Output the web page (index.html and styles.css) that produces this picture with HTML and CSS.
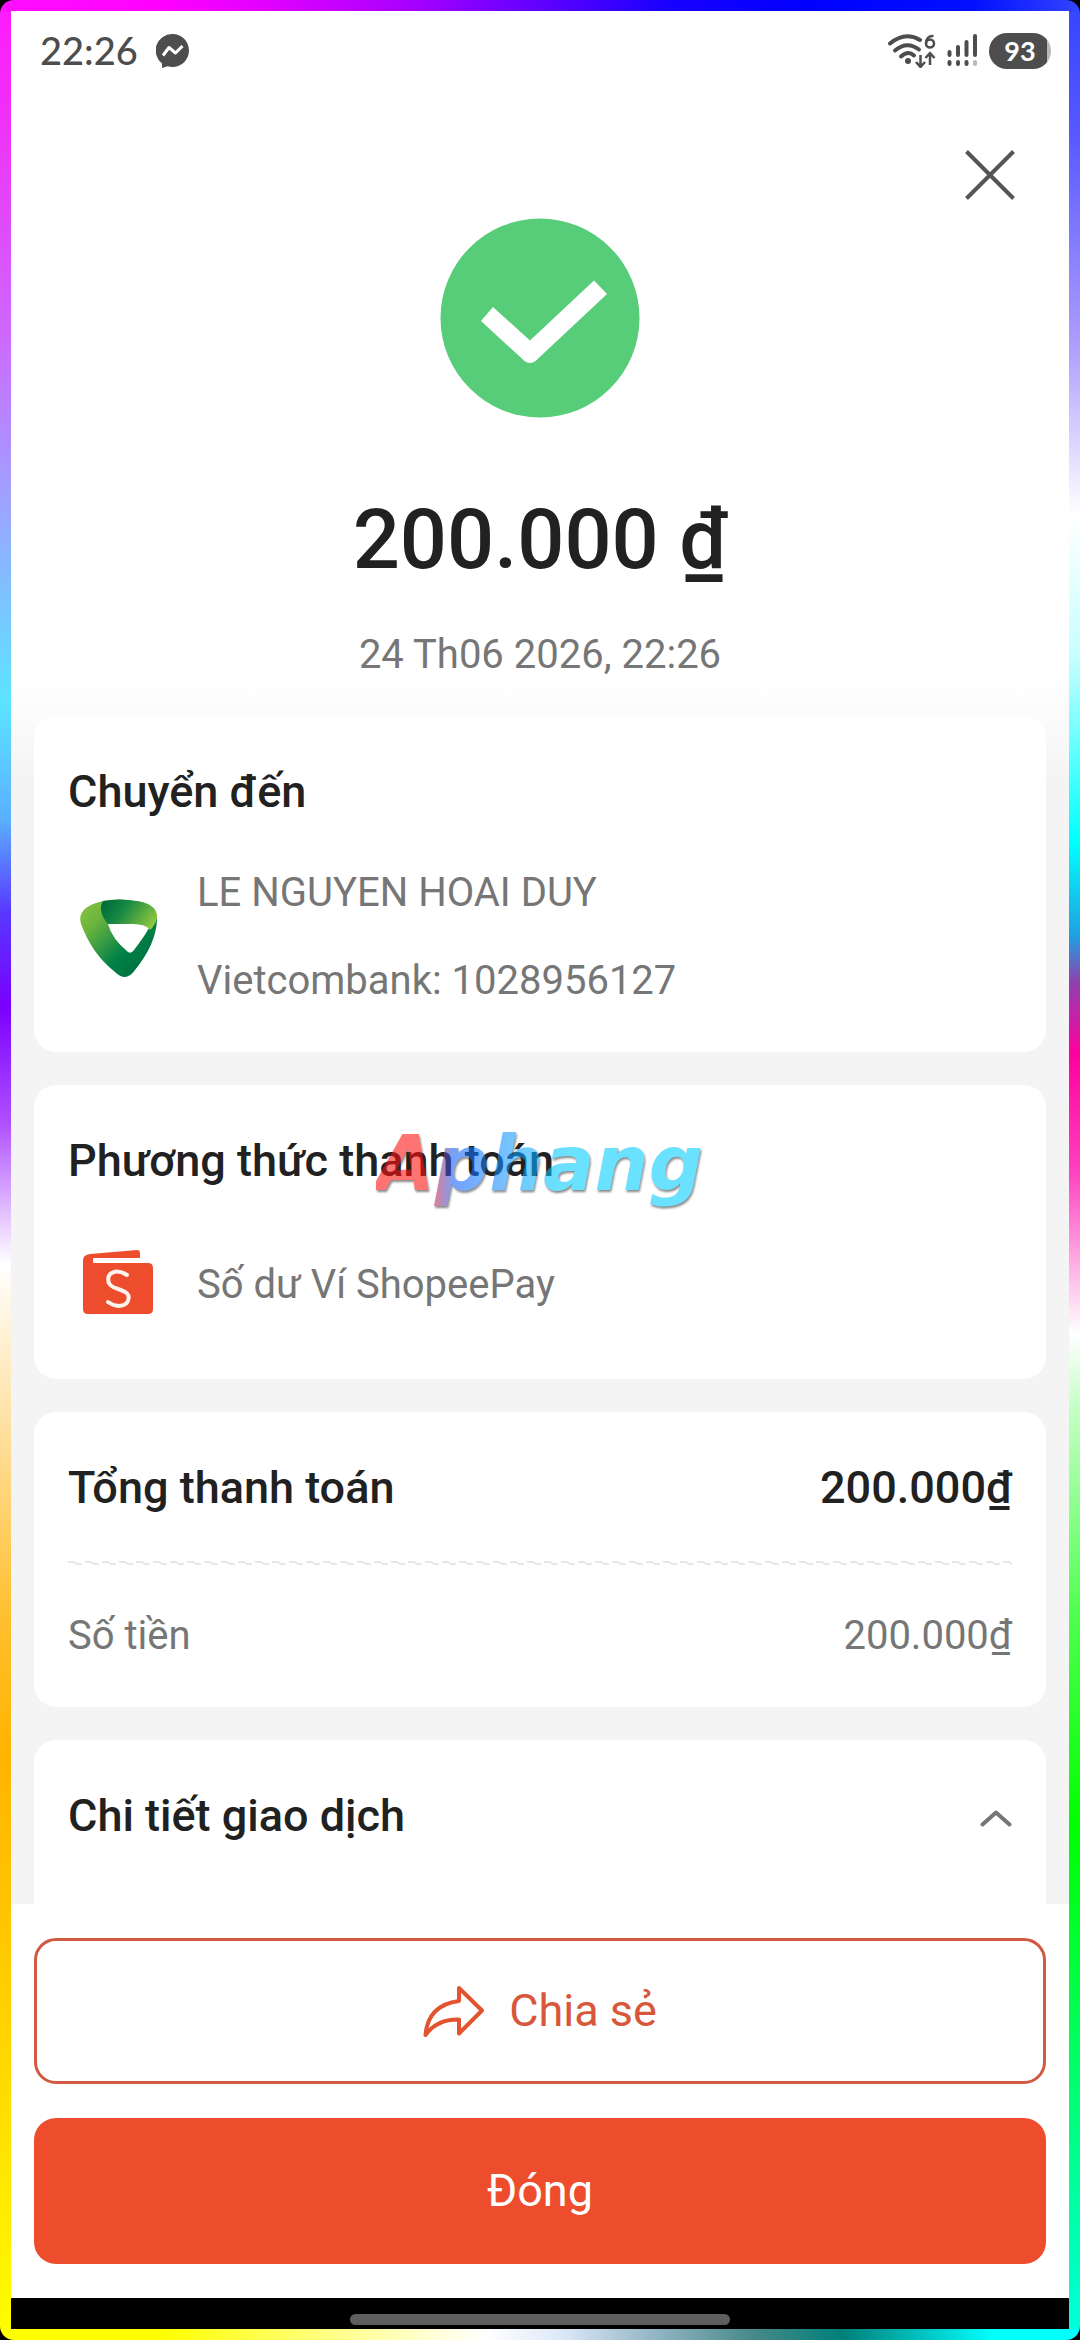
FILE: index.html
```html
<!DOCTYPE html>
<html lang="vi">
<head>
<meta charset="utf-8">
<meta name="viewport" content="width=device-width, initial-scale=1">
<title>Chi tiết giao dịch</title>
<link rel="stylesheet" href="styles.css">
</head>
<body>
<div class="frame">
  <div class="app">
    <div class="status">
      <span class="clock">22:26</span>
      <svg class="status-messenger" width="33" height="34" viewBox="0 0 33 34" aria-hidden="true">
        <path fill="#4d4d4d" d="M16.500 0A16.500 16.500 0 0 1 16.500 33Q14 33 11.500 32.200L6 34V29.500A16.500 16.500 0 0 1 16.500 0Z"/>
        <path fill="none" stroke="#fff" stroke-width="3" stroke-linejoin="round" d="M7 21.500l6-8 6.500 5.500 7-7"/>
      </svg>
      <span class="status-right">
        <svg width="48" height="34" viewBox="0 0 48 34" aria-hidden="true">
          <g fill="none" stroke="#4d4d4d" stroke-width="4" stroke-linecap="round">
            <path d="M2 9.500Q17 -3 32 6"/>
            <path d="M7 16.500Q19 6.500 31 15.500"/>
            <path d="M13 22.500Q20 16 26 21.500"/>
          </g>
          <circle cx="20" cy="27" r="3" fill="#4d4d4d"/>
          <circle cx="42" cy="9.500" r="4" fill="none" stroke="#4d4d4d" stroke-width="2.500"/>
          <path d="M45.500 2Q38.500 1.500 38 9.500" fill="none" stroke="#4d4d4d" stroke-width="2.500"/>
          <path d="M32.500 21v11M28 28l4.500 5 4.500-5M42 31V20M37.500 24l4.500-5 4.500 5" fill="none" stroke="#4d4d4d" stroke-width="2.500"/>
        </svg>
        <svg width="31" height="34" viewBox="0 0 31 34" aria-hidden="true">
          <g stroke="#4d4d4d" stroke-width="4" stroke-linecap="round">
            <path d="M2.500 18v3M11 13v8M19.500 8v13M28 2v19M2.500 28v2M11 28v2M19.500 28v2"/>
            <path stroke="#b8b8b8" d="M28 28v2"/>
          </g>
        </svg>
        <span class="battery">93</span>
      </span>
    </div>

    <header class="summary">
      <button class="dismiss" type="button" aria-label="Thoát">
        <svg width="50" height="50" viewBox="0 0 50 50"><path d="M1.500 1.500l47 47M48.500 1.500l-47 47" stroke="#555" stroke-width="4"/></svg>
      </button>
      <svg class="success" width="200" height="200" viewBox="0 0 200 200" aria-hidden="true">
        <circle cx="100" cy="100" r="99.500" fill="#57cd79"/>
        <path fill="#fff" d="M41 103L53 89 90 122.500 154 62.500 167 76 95.500 143Q90 147 84.500 143Z"/>
      </svg>
      <h1 class="amount">200.000 ₫</h1>
      <p class="date">24 Th06 2026, 22:26</p>
    </header>

    <main class="cards">
      <section class="card">
        <h2>Chuyển đến</h2>
        <div class="party">
          <svg class="party-icon" width="80" height="80" viewBox="0 0 80 80" aria-hidden="true">
            <defs>
              <linearGradient id="vl" x1="0" y1="0" x2="1" y2="1"><stop offset="0" stop-color="#8cc63f"/><stop offset=".25" stop-color="#6ab43e"/><stop offset=".62" stop-color="#008048"/><stop offset="1" stop-color="#006838"/></linearGradient>
              <linearGradient id="vt" x1="0" y1=".2" x2="1" y2=".6"><stop offset="0" stop-color="#006b3a"/><stop offset=".4" stop-color="#188a42"/><stop offset="1" stop-color="#8cc63f"/></linearGradient>
            </defs>
            <path fill="url(#vl)" fill-rule="evenodd" d="M24 2Q40-1 57 2Q79 5 78 21Q77 45 56 71Q47 84 36 73Q13 55 2 25Q-3 8 24 2ZM29 25Q33 40 49 53Q52 55 55 51Q65 38 70 29Q64 24 50 25Z"/>
            <path fill="url(#vt)" d="M24 2Q40-1 57 2Q79 5 78 19Q76 27 71 31Q67 24 50 25H29Q18 12 24 2Z"/>
          </svg>
          <div class="party-lines">
            <p>LE NGUYEN HOAI DUY</p>
            <p>Vietcombank: 1028956127</p>
          </div>
        </div>
      </section>

      <section class="card">
        <h2>Phương thức thanh toán</h2>
        <div class="party">
          <svg class="party-icon" width="80" height="80" viewBox="0 -2 80 80" aria-hidden="true">
            <path fill="#ee4d2d" d="M11 5L58 1Q61 1 61 4V9H14V14H69Q74 14 74 19V60Q74 65 69 65H9Q4 65 4 60V11Q4 6 11 5Z"/>
            <path fill="none" stroke="#fff3ee" stroke-width="4" stroke-linecap="round" d="M48 26Q42 22 37 22.500C27 24 27 35 35 38.500C43 41.500 51 43 49.500 50C48 58 37 59 29 53"/>
          </svg>
          <div class="party-lines">
            <p>Số dư Ví ShopeePay</p>
          </div>
        </div>
        <div class="watermark" aria-hidden="true">Aphang</div>
      </section>

      <section class="card">
        <div class="line">
          <h2>Tổng thanh toán</h2>
          <strong>200.000₫</strong>
        </div>
        <svg class="wave" width="100%" height="6" aria-hidden="true">
          <defs><pattern id="tilde" width="17" height="6" patternUnits="userSpaceOnUse"><path d="M0 2h6l3 2h5" fill="none" stroke="#e0e0e0" stroke-width="1.500"/></pattern></defs>
          <rect width="100%" height="6" fill="url(#tilde)"/>
        </svg>
        <div class="line">
          <span>Số tiền</span>
          <span>200.000₫</span>
        </div>
      </section>

      <section class="card">
        <div class="line">
          <h2>Chi tiết giao dịch</h2>
          <button class="toggle" type="button" aria-expanded="true" aria-label="Thu gọn">
            <svg width="32" height="18" viewBox="0 0 32 18"><path d="M2.500 15.500L16 3.500l13.500 12" fill="none" stroke="#767676" stroke-width="4" stroke-linecap="round" stroke-linejoin="round"/></svg>
          </button>
        </div>
      </section>
    </main>

    <footer class="actions">
      <button class="btn btn-outline" type="button">
        <svg width="61" height="52" viewBox="0 0 61 52" aria-hidden="true"><path d="M36 3L59 25.500 36 48.500V34.500Q14 34 2.500 50Q5 20 36 16Z" fill="none" stroke="#e2532f" stroke-width="4" stroke-linejoin="round"/></svg>
        Chia sẻ
      </button>
      <button class="btn btn-solid" type="button">Đóng</button>
    </footer>
    <div class="home"><span class="home-bar"></span></div>
  </div>
</div>
</body>
</html>
```
FILE: styles.css
```css
* { box-sizing: border-box; }

body {
  margin: 0;
  background: #000;
  color: #767676;
  font: 400 40px/56px Roboto, "Noto Sans", sans-serif;
}

h1, h2, p { margin: 0; }

button {
  font: inherit;
  border: 0;
  padding: 0;
  background: none;
  cursor: pointer;
}

svg { display: block; flex: none; }

/* Rainbow edge light: one gradient strip per side */
.frame {
  height: 100vh;
  padding: 11px;
  border-radius: 14px;
  background:
    linear-gradient(to right, #ff10ff, #ff00ff 15%, #e000ff 25%, #a800ff 38%, #6000ff 50%, #1800ff 62%, #0000ff 75%, #0010ff 90%, #3344ff) top / 100% 11px no-repeat,
    linear-gradient(to right, #ffff00 15%, #ffff80 30%, #ffffff 45%, #dce8f8 52%, #98b8c8 60%, #458888 70%, #00807a 78%, #00ffff 92%) bottom / 100% 11px no-repeat,
    linear-gradient(#ff1aff, #f030f8 5%, #cf66ff 14%, #a0a0ff 21%, #5ce4ff 30%, #5ab0ff 35%, #5838ff 39%, #7a00ff 43%, #b050ff 48%, #ffffff 54%, #ffe0a0 61%, #ffc030 69%, #ffb400 75%, #ffc800 83%, #fff000 96%, #ffff00) left / 11px 100% no-repeat,
    linear-gradient(#3344ff, #5a5aff 6%, #b0a0ff 15%, #ffffff 22%, #c8ffff 28%, #00ffff 36%, #20a0e0 40%, #9040b0 42%, #ff00a0 45%, #ff40c0 50%, #ffffff 57%, #c8ffc8 60%, #50ff50 69%, #00ff00 78%, #00ff50 86%, #00ffe0) right / 11px 100% no-repeat;
}

.app {
  height: 100%;
  display: flex;
  flex-direction: column;
  background: #fff;
}

.status {
  flex: none;
  display: flex;
  align-items: center;
  height: 80px;
  padding: 0 18px 0 29px;
  color: #4d4d4d;
}

.clock {
  padding-bottom: 2px;
  font: 500 38px/44px Lato, sans-serif;
}

.status-messenger { margin-left: 18px; }

.status-right {
  display: flex;
  align-items: center;
  gap: 11px;
  margin-left: auto;
}

.battery {
  width: 62px;
  height: 36px;
  border-radius: 18px;
  background: linear-gradient(to right, #4d4d4d 58px, #b8b8b8 58px);
  color: #fff;
  font: 700 27px/36px Lato, sans-serif;
  text-align: center;
}

.summary {
  flex: none;
  display: flex;
  flex-direction: column;
  align-items: center;
}

.dismiss {
  align-self: flex-end;
  margin: 59px 54px 18px 0;
}

.amount {
  margin-top: 74px;
  color: #212121;
  font-weight: 500;
  font-size: 83px;
  line-height: 96px;
}

.date { margin-top: 39px; }

.cards {
  flex: 1;
  min-height: 0;
  overflow: hidden;
  display: flex;
  flex-direction: column;
  gap: 33px;
  padding: 33px 23px 0;
  background: linear-gradient(#fff, #f4f4f4 96px);
}

.card {
  position: relative;
  flex: none;
  padding: 48px 34px 43px;
  border-radius: 22px;
  background: #fff;
}

.card:last-child { padding-bottom: 96px; }

.card h2, .card strong {
  color: #212121;
  font-weight: 500;
  font-size: 45px;
  line-height: 56px;
}

.party {
  display: flex;
  align-items: center;
  gap: 38px;
  min-height: 102px;
  margin-top: 45px;
}

.party-icon { margin: 4px 0 0 11px; }

.party-lines {
  display: grid;
  gap: 32px;
}

.line {
  display: flex;
  align-items: center;
  justify-content: space-between;
}

.wave { margin: 44px 0 42px; }

.watermark {
  position: absolute;
  top: 34px;
  left: 342px;
  font: italic 700 76px/90px "DejaVu Sans", sans-serif;
  background: linear-gradient(to right, #ff1010 16%, #1060ff 24%, #1888ff 36%, #00ccff 56%);
  -webkit-background-clip: text;
  background-clip: text;
  color: transparent;
  opacity: 0.58;
  filter: drop-shadow(1px 2px 1px #333);
}

.toggle { padding-top: 4px; }

.actions {
  flex: none;
  display: grid;
  gap: 34px;
  padding: 34px 23px;
}

.btn {
  display: flex;
  align-items: center;
  justify-content: center;
  gap: 25px;
  height: 146px;
  border-radius: 22px;
  font-size: 45px;
}

.btn-outline {
  border: 3px solid #d05a42;
  color: #d8563a;
}

.btn-solid {
  background: #ee4d2d;
  color: #fff;
}

.home {
  flex: none;
  display: flex;
  justify-content: center;
  height: 31px;
  padding-top: 16px;
  background: #000;
}

.home-bar {
  width: 36%;
  height: 11px;
  border-radius: 6px;
  background: #5e5e5e;
}
```
